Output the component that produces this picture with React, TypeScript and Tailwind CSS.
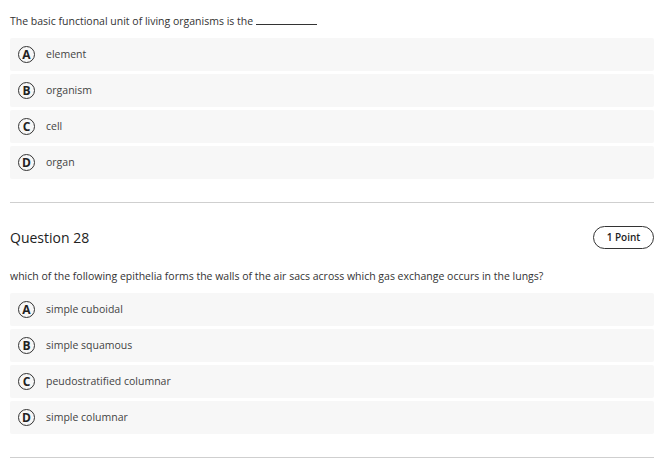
import React from "react";

const letters = ["A", "B", "C", "D"];

function Option({ letter, text }: { letter: string; text: string }) {
  return (
    <div className="flex h-[33px] items-center rounded-[2px] bg-[#f7f7f7] pl-[8px]">
      <div className="flex h-[17px] w-[17px] shrink-0 items-center justify-center rounded-full border-[1.5px] border-[#333] text-[12px] font-bold leading-none text-[#222]">
        {letter}
      </div>
      <span className="ml-[11px] text-[10.5px] text-[#444]">{text}</span>
    </div>
  );
}

function Options({ items }: { items: string[] }) {
  return (
    <div className="mt-[9px] flex flex-col gap-[3px]">
      {items.map((t, i) => (
        <Option key={i} letter={letters[i]} text={t} />
      ))}
    </div>
  );
}

export default function App() {
  return (
    <div
      className="min-h-[467px] bg-white pl-[10px] pr-[18px] pt-[14px] text-[#333]"
      style={{ fontFamily: '"Open Sans", "Noto Sans", sans-serif' }}
    >
      <p className="text-[10.5px] leading-[15px] text-[#333]">
        The basic functional unit of living organisms is the{" "}
        <span className="inline-block h-[10px] w-[61px] border-b border-[#333] align-baseline"></span>
      </p>
      <Options items={["element", "organism", "cell", "organ"]} />
      <hr className="mt-[23px] border-0 border-t border-[#cfcfcf]" />

      <div className="mt-[23px] flex h-[23px] items-center justify-between">
        <h2 className="text-[14px] font-medium leading-none text-[#222]">Question 28</h2>
        <span className="flex h-[23px] w-[61px] items-center justify-center rounded-full border border-[#333] text-[10px] font-semibold text-[#222]">
          1 Point
        </span>
      </div>
      <p className="mt-[20px] text-[10.5px] leading-[15px] text-[#333]">
        which of the following epithelia forms the walls of the air sacs across which gas exchange occurs in the lungs?
      </p>
      <Options
        items={[
          "simple cuboidal",
          "simple squamous",
          "peudostratified columnar",
          "simple columnar",
        ]}
      />
      <hr className="mt-[23px] border-0 border-t border-[#cfcfcf]" />
    </div>
  );
}
